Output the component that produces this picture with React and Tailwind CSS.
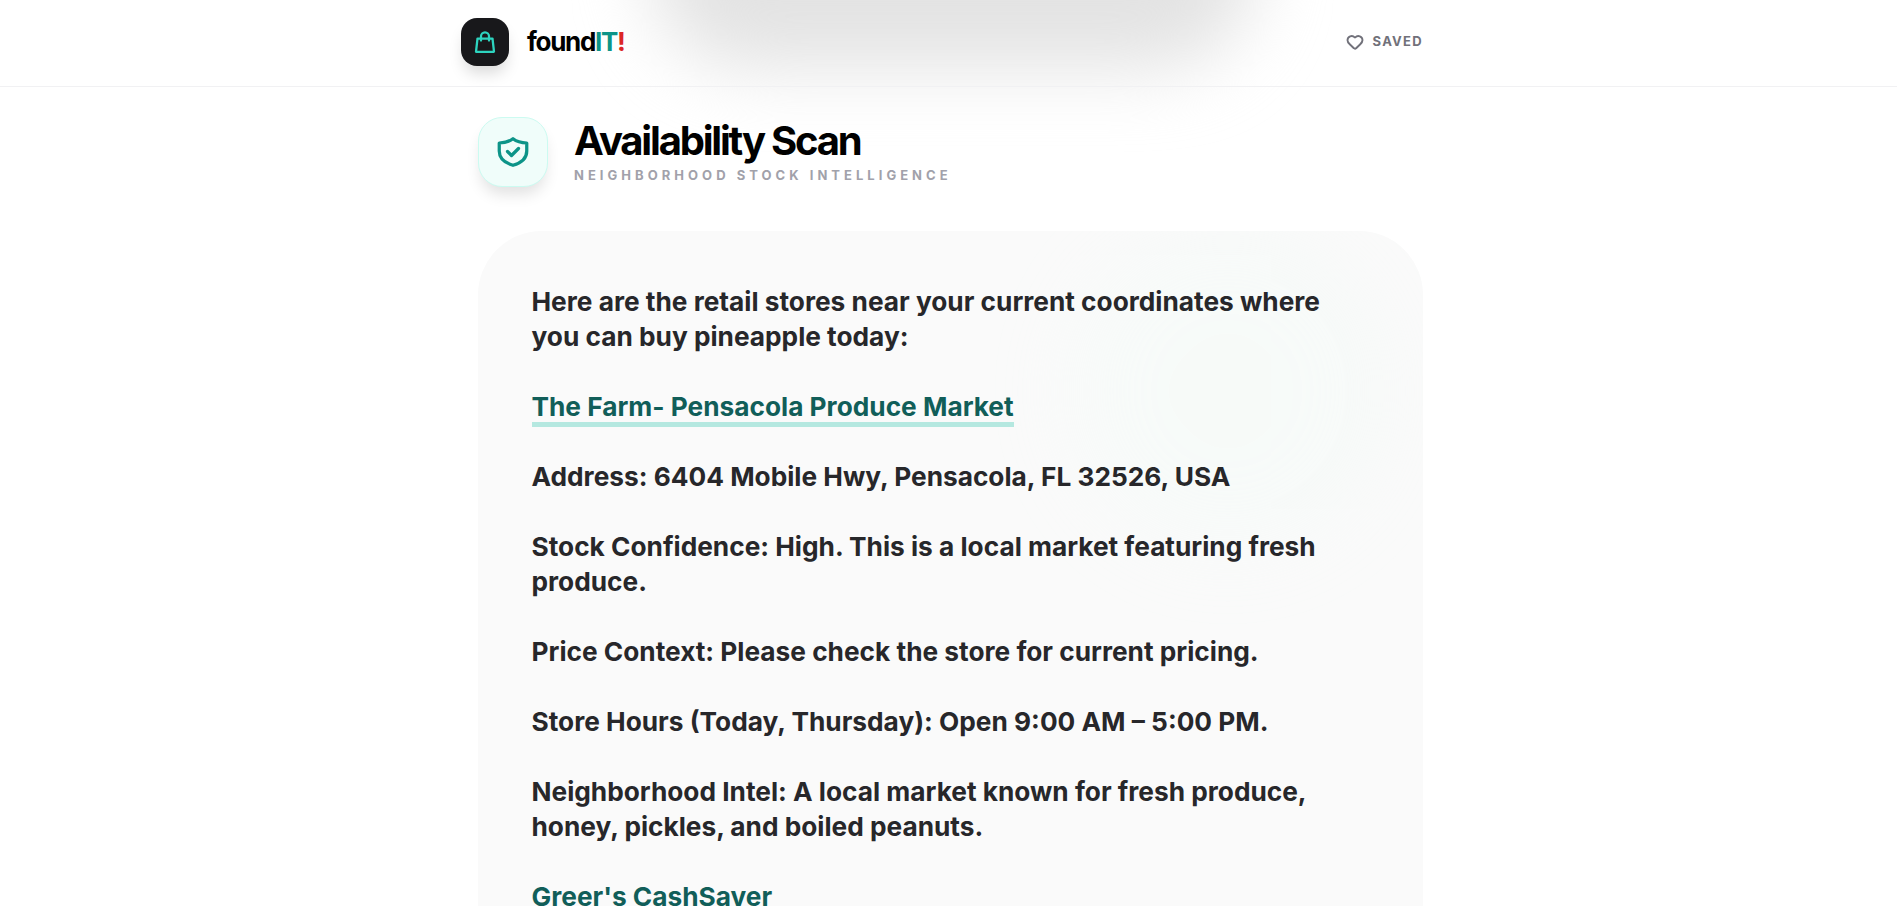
import { Heart } from 'lucide-react';

// Stock scan results, one entry per paragraph. Blank line between each.
const PARAGRAPHS = [
  { text: 'Here are the retail stores near your current coordinates where you can buy pineapple today:' },
  { text: 'The Farm- Pensacola Produce Market', link: true },
  { text: 'Address: 6404 Mobile Hwy, Pensacola, FL 32526, USA' },
  { text: 'Stock Confidence: High. This is a local market featuring fresh produce.' },
  { text: 'Price Context: Please check the store for current pricing.' },
  { text: 'Store Hours (Today, Thursday): Open 9:00 AM – 5:00 PM.' },
  { text: 'Neighborhood Intel: A local market known for fresh produce, honey, pickles, and boiled peanuts.' },
  { text: "Greer's CashSaver", link: true },
];

function BagIcon() {
  return (
    <svg width="24" height="24" viewBox="0 0 24 24" fill="none" stroke="#2dd4bf" strokeWidth="2.25" strokeLinejoin="round" strokeLinecap="round">
      <path d="M4.500 8.500h15l1.500 13.250H3l1.500-13.250z" />
      <path d="M8 10.500V6.250a4 4 0 0 1 8 0v4.250" />
    </svg>
  );
}

function ShieldIcon() {
  return (
    <svg width="32" height="32" viewBox="0 0 32 32" fill="none" stroke="#0d9488" strokeWidth="3.25" strokeLinejoin="round" strokeLinecap="round">
      <path d="M16 2.750C19.500 5.500 24.500 6.900 29.750 7V15C29.750 22 24 27 16 29.250C8 27 2.250 22 2.250 15V7C7.500 6.900 12.500 5.500 16 2.750Z" />
      <path d="M10.500 15.500l4 4 7-7" />
    </svg>
  );
}

export default function App() {
  return (
    <div className="relative h-screen overflow-hidden bg-white font-['Inter',sans-serif]">
      {/* blurred blob behind the header */}
      <div className="absolute left-[650px] top-[-200px] h-[268px] w-[605px] rounded-[100px] bg-[#e3e3e3] blur-[35px]" />

      <header className="relative h-[87px] border-b border-[#f1f1f3] pb-[2px] pl-[461px] pr-[474px] flex items-center justify-between">
        <div className="flex items-center gap-[18px]">
          <div className="w-[48px] h-[48px] rounded-2xl bg-[#18181b] flex items-center justify-center shadow-[0_10px_15px_-3px_rgba(0,0,0,0.15)]">
            <BagIcon />
          </div>
          <div className="pb-[2px] text-[26px] font-bold tracking-[-0.05em] text-black">
            found<span className="text-[#0d9488]">IT</span><span className="text-[#dc2626]">!</span>
          </div>
        </div>
        <div className="flex items-center gap-[9px] text-[#71717a]">
          <Heart size={18} strokeWidth={2.5} />
          <span className="text-[13px] font-bold tracking-[0.1em]">SAVED</span>
        </div>
      </header>

      <main className="relative pl-[478px] pr-[474px]">
        <div className="flex items-center gap-[26px] pt-[30px]">
          <div className="w-[70px] h-[70px] rounded-3xl bg-[#f0fdfa] border border-[#ccfbf1] flex items-center justify-center shadow-[0_10px_15px_-3px_rgba(0,0,0,0.12)]">
            <ShieldIcon />
          </div>
          <div>
            <h1 className="text-[40px] leading-[38px] font-bold tracking-[-0.055em] text-black">Availability Scan</h1>
            <p className="mt-[7px] text-[13px] leading-[16px] font-bold tracking-[0.31em] text-[#a1a1aa]">NEIGHBORHOOD STOCK INTELLIGENCE</p>
          </div>
        </div>

        <section className="relative mt-[44px] rounded-[64px] bg-[#fafafa] overflow-hidden px-[53.5px] py-[53px]">
          <div className="absolute left-[590px] top-[0px] h-[320px] w-[320px] rounded-full bg-[#ecfdf5] opacity-20 blur-[40px]" />
          <div className="relative flex flex-col gap-[35px] text-[26.25px] leading-[35px] font-bold text-[#27272a]">
            {PARAGRAPHS.map((p, i) => (
              <p key={i}>
                {p.link ? (
                  <span className="text-[#115e59] border-b-[5px] border-[#b5e8e0]">{p.text}</span>
                ) : p.text}
              </p>
            ))}
          </div>
        </section>
      </main>
    </div>
  );
}
